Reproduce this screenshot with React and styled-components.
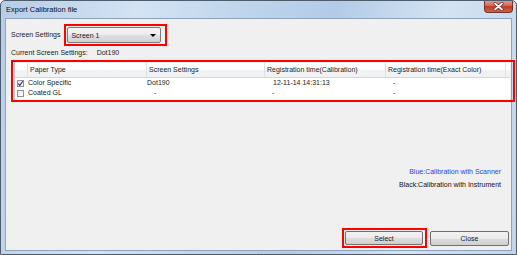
import React from "react";
import styled, { createGlobalStyle } from "styled-components";

const GlobalStyle = createGlobalStyle`
  html, body {
    margin: 0;
    padding: 0;
    background: #ffffff;
  }
  body {
    font-family: "Liberation Sans", Arial, sans-serif;
    font-size: 7px;
    color: #1a1a1a;
  }
`;

const rows = [
  { checked: true, paper: "Color Specific", screen: "Dot190", screenPad: 0, cal: "12-11-14 14:31:13", calPad: 8, exact: "-", exactPad: 7 },
  { checked: false, paper: "Coated GL", screen: "-", screenPad: 7, cal: "-", calPad: 7, exact: "-", exactPad: 7 },
];

const headers = ["Paper Type", "Screen Settings", "Registration time(Calibration)", "Registration time(Exact Color)"];

export default function App() {
  return (
    <>
      <GlobalStyle />
      <Window>
        <TitleBar>
          <Title>Export Calibration file</Title>
          <CloseButton>
            <svg width="11" height="9" viewBox="0 0 11 9">
              <path d="M2 1.5 L9 7.5 M9 1.5 L2 7.5" stroke="#6b2a22" strokeWidth="3.2" strokeLinecap="round" />
              <path d="M2 1.5 L9 7.5 M9 1.5 L2 7.5" stroke="#ffffff" strokeWidth="1.8" strokeLinecap="round" />
            </svg>
          </CloseButton>
        </TitleBar>

        <Client>
          <SettingsRow>
            <Label>Screen Settings</Label>
            <Highlight $pad="1px 4px 1px 1px">
              <Dropdown>
                <span>Screen 1</span>
                <Arrow />
              </Dropdown>
            </Highlight>
          </SettingsRow>

          <CurrentLine>
            <span>Current Screen Settings:</span>
            <span>Dot190</span>
          </CurrentLine>

          <TableHighlight>
            <ListView>
              <HeaderRow>
                <HeaderCell />
                {headers.map((h) => (
                  <HeaderCell key={h}>{h}</HeaderCell>
                ))}
              </HeaderRow>
              {rows.map((r) => (
                <DataRow key={r.paper}>
                  <CheckCell>
                    <CheckBox>
                      {r.checked && (
                        <svg width="7" height="7" viewBox="0 0 7 7">
                          <path d="M1.2 3.6 L2.8 5.4 L5.8 1.2" stroke="#1c2f7a" strokeWidth="1.1" fill="none" />
                        </svg>
                      )}
                    </CheckBox>
                  </CheckCell>
                  <Cell $pad={0}>{r.paper}</Cell>
                  <Cell $pad={r.screenPad}>{r.screen}</Cell>
                  <Cell $pad={r.calPad}>{r.cal}</Cell>
                  <Cell $pad={r.exactPad}>{r.exact}</Cell>
                </DataRow>
              ))}
            </ListView>
          </TableHighlight>

          <Legend>
            <LegendLine $color="#2a3cff">Blue:Calibration with Scanner</LegendLine>
            <LegendLine $color="#111111">Black:Calibration with Instrument</LegendLine>
          </Legend>

          <ButtonRow>
            <Highlight $pad="1px 2px 1px 1px">
              <Button $width={78} $height={14}>Select</Button>
            </Highlight>
            <Button $width={79} $height={15}>Close</Button>
          </ButtonRow>
        </Client>
      </Window>
    </>
  );
}

const Window = styled.div`
  width: 517px;
  height: 255px;
  box-sizing: border-box;
  border: 1px solid #4e5d6e;
  border-radius: 5px 5px 0 0;
  background: linear-gradient(100deg, #b6cde6 0%, #d3e3f4 25%, #bed4eb 45%, #b3cbe6 60%, #d4e3f3 80%, #c0d5ec 100%);
  display: flex;
  flex-direction: column;
  overflow: hidden;
`;

const TitleBar = styled.div`
  height: 17px;
  display: flex;
  justify-content: space-between;
  align-items: flex-start;
  padding-left: 5px;
`;

const Title = styled.div`
  font-size: 7.5px;
  line-height: 17px;
  color: #0c0c0c;
`;

const CloseButton = styled.div`
  width: 29px;
  height: 13px;
  margin-right: 3px;
  margin-top: -1px;
  box-sizing: border-box;
  border: 1px solid #6f332b;
  border-top: none;
  border-radius: 0 0 4px 4px;
  background: linear-gradient(to bottom, #e8a294 0%, #d66a58 45%, #bf3a26 55%, #d85f46 100%);
  display: flex;
  align-items: center;
  justify-content: center;
`;

const Client = styled.div`
  flex: 1;
  margin: 0 4px 3px 4px;
  border: 1px solid #8ea3bb;
  background: #f0f0f0;
  display: flex;
  flex-direction: column;
  padding-left: 5px;
`;

const SettingsRow = styled.div`
  margin-top: 5px;
  display: flex;
  align-items: center;
  gap: 4px;
`;

const Label = styled.span`
  line-height: 10px;
`;

const Highlight = styled.div`
  border: 2px solid #ff0000;
  padding: ${(p) => p.$pad};
  display: flex;
`;

const Dropdown = styled.div`
  width: 94px;
  height: 16px;
  box-sizing: border-box;
  border: 1px solid #7a7a7a;
  border-radius: 2px;
  background: linear-gradient(to bottom, #f4f4f4 0%, #ececec 50%, #e0e0e0 51%, #d3d3d3 100%);
  display: flex;
  align-items: center;
  justify-content: space-between;
  padding: 0 4px 0 3px;
`;

const Arrow = styled.span`
  width: 0;
  height: 0;
  border-left: 3px solid transparent;
  border-right: 3px solid transparent;
  border-top: 3px solid #000;
  margin-top: 1px;
`;

const CurrentLine = styled.div`
  margin-top: 2px;
  line-height: 10px;
  display: flex;
  gap: 9px;
`;

const TableHighlight = styled.div`
  margin-top: 2px;
  margin-right: -4px;
  height: 42px;
  box-sizing: border-box;
  border: 2px solid #ff0000;
  padding: 1px 3px 0 1px;
  display: flex;
`;

const ListView = styled.div`
  flex: 1;
  background: #ffffff;
  height: 37px;
  box-sizing: border-box;
  border-left: 1px solid #c9cdd3;
`;

const columns = "13px 119px 118px 121px 120px";

const HeaderRow = styled.div`
  display: grid;
  grid-template-columns: ${columns};
  height: 15px;
  background: linear-gradient(to bottom, #ffffff 0%, #ffffff 50%, #f1f2f4 51%, #f1f2f4 100%);
  border-bottom: 1px solid #d5d5d5;
  box-sizing: border-box;
`;

const HeaderCell = styled.div`
  border-right: 1px solid #dfe2e6;
  padding-left: 2px;
  line-height: 14px;
  color: #1a1a1a;
  white-space: nowrap;
  overflow: hidden;
`;

const DataRow = styled.div`
  display: grid;
  grid-template-columns: ${columns};
  height: 10px;
`;

const CheckCell = styled.div`
  display: flex;
  align-items: center;
  justify-content: flex-end;
  padding-right: 4px;
`;

const CheckBox = styled.div`
  width: 7px;
  height: 7px;
  box-sizing: border-box;
  border: 1px solid #8e8f8f;
  background: linear-gradient(135deg, #e6e6e6, #ffffff);
  display: flex;
  align-items: center;
  justify-content: center;
  svg {
    margin: -1px;
  }
`;

const Cell = styled.div`
  line-height: 10px;
  padding-left: ${(p) => p.$pad}px;
  white-space: nowrap;
`;

const Legend = styled.div`
  margin-top: 65px;
  display: flex;
  flex-direction: column;
  align-items: flex-end;
  gap: 3px;
  padding-right: 10px;
`;

const LegendLine = styled.div`
  line-height: 10px;
  color: ${(p) => p.$color};
`;

const ButtonRow = styled.div`
  margin-top: auto;
  margin-bottom: 2px;
  display: flex;
  justify-content: flex-end;
  align-items: center;
  gap: 3px;
  padding-right: 2px;
`;

const Button = styled.div`
  width: ${(p) => p.$width}px;
  height: ${(p) => p.$height}px;
  box-sizing: border-box;
  border: 1px solid #707070;
  border-radius: 2px;
  background: linear-gradient(to bottom, #f2f2f2 0%, #ebebeb 50%, #dddddd 51%, #cfcfcf 100%);
  display: flex;
  align-items: center;
  justify-content: center;
`;
